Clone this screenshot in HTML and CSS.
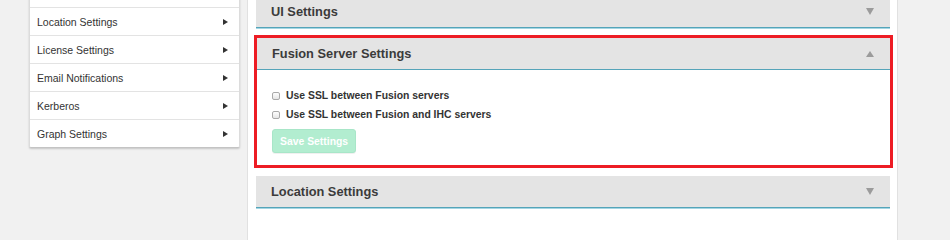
FILE: index.html
```html
<!DOCTYPE html>
<html lang="en">
<head>
<meta charset="utf-8">
<title>Settings</title>
<link rel="stylesheet" href="styles.css">
</head>
<body>
<div class="layout">
  <nav class="sidebar">
    <ul class="menu">
      <li class="menu-item"></li>
      <li class="menu-item"><span class="menu-label">Location Settings</span><span class="arrow"></span></li>
      <li class="menu-item"><span class="menu-label">License Settings</span><span class="arrow"></span></li>
      <li class="menu-item"><span class="menu-label">Email Notifications</span><span class="arrow"></span></li>
      <li class="menu-item"><span class="menu-label">Kerberos</span><span class="arrow"></span></li>
      <li class="menu-item"><span class="menu-label">Graph Settings</span><span class="arrow"></span></li>
    </ul>
  </nav>
  <main class="content">
    <section class="panel panel-first">
      <header class="panel-header">
        <h2 class="panel-title">UI Settings</h2>
        <span class="caret caret-down"></span>
      </header>
    </section>
    <div class="highlight">
      <section class="panel">
        <header class="panel-header">
          <h2 class="panel-title">Fusion Server Settings</h2>
          <span class="caret caret-up"></span>
        </header>
        <div class="panel-body">
          <label class="check-row"><input type="checkbox" class="check"><span>Use SSL between Fusion servers</span></label>
          <label class="check-row"><input type="checkbox" class="check"><span>Use SSL between Fusion and IHC servers</span></label>
          <button class="btn-save" type="button">Save Settings</button>
        </div>
      </section>
    </div>
    <section class="panel">
      <header class="panel-header">
        <h2 class="panel-title">Location Settings</h2>
        <span class="caret caret-down"></span>
      </header>
    </section>
  </main>
</div>
</body>
</html>
```
FILE: styles.css
```css
html, body {
  margin: 0;
  padding: 0;
}
body {
  background: #f1f1f1;
  font-family: "Liberation Sans", Arial, sans-serif;
  overflow: hidden;
  min-height: 100vh;
}
.layout {
  display: flex;
  min-height: 100vh;
}
.sidebar {
  flex: none;
  width: 211px;
  margin-left: 29px;
  margin-top: -20px;
  align-self: flex-start;
}
.menu {
  list-style: none;
  margin: 0;
  padding: 0;
  background: #fff;
  border: 1px solid #dcdcdc;
  border-top: 0;
  border-bottom: 1px solid #c4c4c4;
  border-radius: 0 0 2px 2px;
  box-shadow: 0 1px 2px rgba(0, 0, 0, 0.18);
}
.menu-item {
  height: 27px;
  border-bottom: 1px solid #e3e3e3;
  display: flex;
  align-items: center;
  justify-content: space-between;
  padding: 0 11px 0 7px;
  font-size: 10.5px;
  color: #333;
}
.menu-item:last-child {
  border-bottom: 0;
}
.arrow {
  width: 0;
  height: 0;
  border-top: 3px solid transparent;
  border-bottom: 3px solid transparent;
  border-left: 5px solid #333;
}
.content {
  flex: none;
  width: 651px;
  box-sizing: border-box;
  margin-left: 7px;
  background: #fff;
  border-left: 1px solid #e1e1e1;
  border-right: 1px solid #e1e1e1;
  padding: 0 7px 0 8px;
}
.panel {
  margin-bottom: 8px;
}
.panel-first {
  margin-top: -4px;
  margin-bottom: 7px;
}
.panel-header {
  height: 31px;
  background: #e4e4e4;
  border-bottom: 1px solid #55a4b9;
  box-shadow: 0 1px 0 #a4d6e3;
  display: flex;
  align-items: center;
  justify-content: space-between;
  padding: 0 16px 0 15px;
}
.panel-title {
  margin: 0;
  font-size: 12.8px;
  font-weight: bold;
  color: #3b3b3b;
}
.caret {
  width: 0;
  height: 0;
}
.caret-down {
  border-left: 4.5px solid transparent;
  border-right: 4.5px solid transparent;
  border-top: 7px solid #9b9b9b;
}
.caret-up {
  border-left: 4px solid transparent;
  border-right: 4px solid transparent;
  border-bottom: 6px solid #9b9b9b;
}
.highlight {
  border: 3px solid #ed1c24;
  margin: 0 -3px 8px -2px;
}
.highlight .panel {
  margin-bottom: 0;
}
.panel-body {
  height: 95px;
  box-sizing: border-box;
  padding: 16px 15px 12px 15px;
  background: #fff;
}
.check-row {
  display: flex;
  align-items: center;
  height: 19px;
  font-size: 10.4px;
  font-weight: bold;
  color: #333;
}
.check {
  -webkit-appearance: none;
  appearance: none;
  width: 8px;
  height: 8px;
  margin: 0 6px 0 0;
  border: 1px solid #a9a9a9;
  border-radius: 2px;
  background: linear-gradient(#fdfdfd, #e6e6e6);
  box-sizing: border-box;
}
.btn-save {
  display: block;
  margin-top: 5px;
  height: 24px;
  padding: 0 7px;
  background: #b2edd0;
  border: 1px solid #a8e6c8;
  border-radius: 3px;
  color: #fff;
  font-family: "Liberation Sans", Arial, sans-serif;
  font-size: 10.4px;
  font-weight: bold;
  box-shadow: 0 1px 0 rgba(0, 0, 0, 0.06);
}
```
